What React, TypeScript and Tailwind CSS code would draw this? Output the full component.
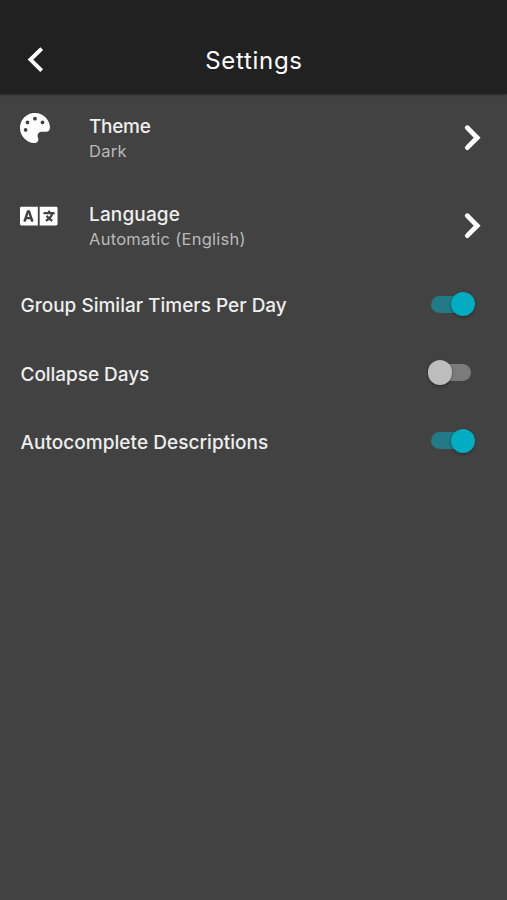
import { FaLanguage, FaPalette } from "react-icons/fa";
import type { ReactNode } from "react";

function Chevron() {
  return (
    <svg className="h-[28px] w-[20px]" viewBox="0 0 20 28" fill="none" stroke="#fff" strokeWidth="4.8" strokeLinecap="round">
      <path d="M4.3 3.8 14.2 13.7 4.3 23.6" />
    </svg>
  );
}

function LinkRow({ icon, title, value, titleClass, valueClass }: { icon: ReactNode; title: string; value: string; titleClass: string; valueClass: string }) {
  return (
    <div className="flex h-[88px] items-start pl-[20px] pr-[24px]">
      <div className="flex w-[69px] pt-[19px] text-white">{icon}</div>
      <div className="flex-1 pt-[20px]">
        <div className={`text-[19px] font-medium leading-[26px] text-[#eeeeee] ${titleClass}`}>{title}</div>
        <div className={`text-[16.5px] leading-[23px] text-[#b9b9b9] ${valueClass}`}>{value}</div>
      </div>
      <div className="pt-[30px]"><Chevron /></div>
    </div>
  );
}

function SwitchRow({ label, on, labelClass }: { label: string; on: boolean; labelClass: string }) {
  return (
    <div className="flex h-[68.4px] items-center justify-between pl-[20.5px] pr-[32px]">
      <span className={`whitespace-nowrap pt-[4px] text-[19px] font-medium leading-[26px] text-[#eeeeee] ${labelClass}`}>{label}</span>
      <div className={`flex h-[25px] w-[47.5px] items-center ${on ? "justify-end" : "justify-start"}`}>
        {on && <div className="h-[17px] w-[32px] rounded-l-full bg-[#217a85]" />}
        <div className={`h-[24.5px] w-[24.5px] shrink-0 rounded-full shadow-[0_1px_3px_rgba(0,0,0,0.4)] ${on ? "-ml-[12px] bg-[#00acc1]" : "relative bg-[#bdbdbd]"}`} />
        {!on && <div className="-ml-[12px] h-[17px] w-[31px] rounded-r-full bg-[#7b7b7b]" />}
      </div>
    </div>
  );
}

export default function App() {
  return (
    <div className="flex h-[900px] w-[507px] flex-col overflow-hidden bg-[#424242] font-['Inter','Liberation_Sans',sans-serif]">
      <header className="grid h-[94px] shrink-0 grid-cols-[1fr_auto_1fr] items-center bg-[#212121] pt-[27px] shadow-[0_1px_2px_rgba(0,0,0,0.35)]">
        <svg className="ml-[26px] h-[28px] w-[20px]" viewBox="0 0 20 28" fill="none" stroke="#fff" strokeWidth="4">
          <path d="M15.7 1.6 4.5 12.6 15.7 23.6" />
        </svg>
        <h1 className="pl-[1px] text-[24px] leading-[32px] tracking-[0.7px] text-white">Settings</h1>
      </header>
      <main>
        <LinkRow icon={<FaPalette className="ml-[0.4px] h-[30px] w-[30px]" />} title="Theme" value="Dark" titleClass="tracking-[-0.3px]" valueClass="tracking-[0.3px]" />
        <LinkRow icon={<FaLanguage className="h-[30px] w-[37.5px]" />} title="Language" value="Automatic (English)" titleClass="tracking-[0.15px]" valueClass="tracking-[0.27px]" />
        <SwitchRow label="Group Similar Timers Per Day" on labelClass="" />
        <SwitchRow label="Collapse Days" on={false} labelClass="tracking-[-0.05px]" />
        <SwitchRow label="Autocomplete Descriptions" on labelClass="tracking-[0.04px]" />
      </main>
    </div>
  );
}
